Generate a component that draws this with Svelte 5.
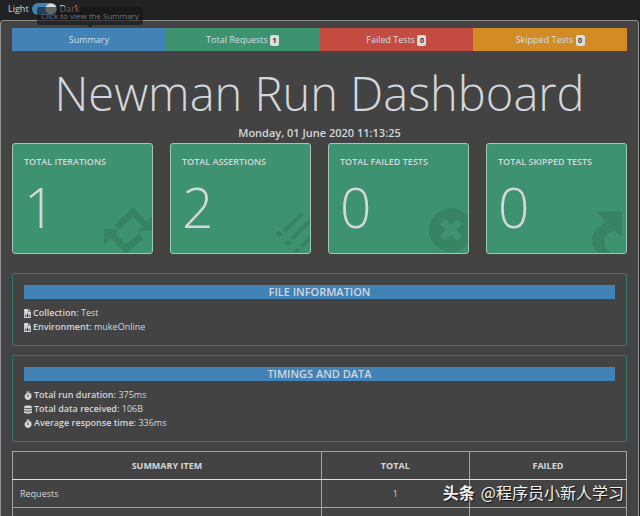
<script>
    let dark = $state(true);
    let active = $state('Summary');

    const tabs = [
        { name: 'Summary', color: 'blue' },
        { name: 'Total Requests', color: 'green', count: 1 },
        { name: 'Failed Tests', color: 'red', count: 0 },
        { name: 'Skipped Tests', color: 'orange', count: 0 }
    ];

    const cards = [
        { title: 'Total Iterations', value: 1, icon: 'retweet' },
        { title: 'Total Assertions', value: 2, icon: 'list' },
        { title: 'Total Failed Tests', value: 0, icon: 'times' },
        { title: 'Total Skipped Tests', value: 0, icon: 'share' }
    ];

    const sections = [
        {
            title: 'File Information',
            rows: [
                { icon: 'file', label: 'Collection:', value: 'Test' },
                { icon: 'file', label: 'Environment:', value: 'mukeOnline' }
            ]
        },
        {
            title: 'Timings and Data',
            rows: [
                { icon: 'clock', label: 'Total run duration:', value: '375ms' },
                { icon: 'data', label: 'Total data received:', value: '106B' },
                { icon: 'clock', label: 'Average response time:', value: '336ms' }
            ]
        }
    ];

    const summary = [
        { item: 'Requests', total: 1, failed: '' },
        { item: '', total: '', failed: '' }
    ];
</script>

<div class="page">
    <header>
        <label for="theme">Light</label>
        <input id="theme" type="checkbox" bind:checked={dark} />
        <label for="theme">Dark</label>
        <div class="tooltip" role="tooltip">Click to view the Summary</div>
    </header>

    <main>
        <nav>
            {#each tabs as tab}
                <button class={tab.color} onclick={() => (active = tab.name)}>
                    {tab.name}
                    {#if tab.count !== undefined}<span class="badge">{tab.count}</span>{/if}
                </button>
            {/each}
        </nav>

        <h1>Newman Run Dashboard</h1>
        <h2>Monday, 01 June 2020 11:13:25</h2>

        <div class="cards">
            {#each cards as card}
                <article class="card">
                    <h3>{card.title}</h3>
                    <p>{card.value}</p>
                    <svg class="card-icon" viewBox="0 0 50 50" aria-hidden="true">
                        {#if card.icon === 'retweet'}
                            <path fill="none" stroke="currentColor" stroke-width="7" d="M15 24 31 9 44 22V26M39 33 24 46 9 31V28" />
                            <path d="M35 28H51V12zM2 26H18L2 42z" />
                        {:else if card.icon === 'list'}
                            <path fill="none" stroke="currentColor" stroke-width="4" d="M24 28 42 11M32 36 55 13M41 44 60 25" />
                            <path d="M19 27l4 4-4 4-4-4zM28 36l4 4-4 4-4-4zM37 44l4 4-4 4-4-4z" />
                        {:else if card.icon === 'times'}
                            <path fill-rule="evenodd" d="M33 5a22 22 0 1 0 0 44 22 22 0 1 0 0-44zM27 16l6 6 6-6 5 5-6 6 6 6-5 5-6-6-6 6-5-5 6-6-6-6z" />
                        {:else}
                            <path d="M20 8H46V34L39 28C27 30 25 40 34 50H24C11 42 14 27 30 19z" />
                        {/if}
                    </svg>
                </article>
            {/each}
        </div>

        {#each sections as section}
            <section>
                <h4>{section.title}</h4>
                {#each section.rows as row}
                    <div class="info">
                        <svg class:narrow={row.icon === 'file'} viewBox={row.icon === 'file' ? '0 0 12 16' : '0 0 16 16'} aria-hidden="true">
                            {#if row.icon === 'file'}
                                <path fill-rule="evenodd" d="M0 0H7V5H12V16H0zM2 10V14H4V10zM5 8V14H7V8zM8 10V14H10V10zM8 0l4 4H8z" />
                            {:else if row.icon === 'clock'}
                                <path fill-rule="evenodd" d="M5 0H11V2H9V3l3 1 1-1 2 2-1 1a7 7 0 1 1-7-3V2H5zM7 6V11H9V6z" />
                            {:else}
                                <path d="M0 2C1-1 15-1 16 2V4C15 6 1 6 0 4zM0 6q8 3 16 0V9C15 11 1 11 0 9zM0 11q8 3 16 0V14C15 17 1 17 0 14z" />
                            {/if}
                        </svg>
                        <span><strong>{row.label}</strong> {row.value}</span>
                    </div>
                {/each}
            </section>
        {/each}

        <table>
            <thead>
                <tr>
                    <th class="item">Summary Item</th>
                    <th class="total">Total</th>
                    <th>Failed</th>
                </tr>
            </thead>
            <tbody>
                {#each summary as row}
                    <tr>
                        <td>{row.item}</td>
                        <td>{row.total}</td>
                        <td>{row.failed}</td>
                    </tr>
                {/each}
            </tbody>
        </table>
    </main>

    <div class="watermark"><b>头条</b><span>@程序员小新人学习</span></div>
</div>

<style>
    :global(body) {
        background: #222;
    }

    .page {
        position: relative;
        height: 100vh;
        overflow: hidden;
        color: #d3d7db;
        font-family: 'Open Sans', 'Noto Sans', sans-serif;
        font-size: 9px;
        line-height: 14px;
    }

    h1, h2, h3, h4, p {
        margin: 0;
    }

    header {
        position: relative;
        display: flex;
        align-items: center;
        gap: 3px;
        box-sizing: border-box;
        height: 20px;
        padding: 0 8px 2px;
    }

    header input {
        appearance: none;
        width: 25px;
        height: 12px;
        margin: 0;
        border-radius: 6px;
        background: radial-gradient(circle at 19px 6px, #dcdcdc 5px, transparent 6px), #4183b7;
    }

    .tooltip {
        position: absolute;
        top: 7px;
        left: 37px;
        padding: 2px 4px;
        border-radius: 2px;
        background: rgba(20, 20, 20, 0.6);
        color: #777;
        font-size: 8px;
        white-space: nowrap;
    }

    .tooltip::after {
        content: '';
        position: absolute;
        top: 100%;
        left: 50%;
        margin-left: -3px;
        border: 3px solid transparent;
        border-top-color: #282828;
    }

    main {
        margin: 0 1px 0 0;
        padding: 7px 11px 0;
        border: 1px solid #929292;
        border-radius: 3px 3px 0 0;
        background: #434343;
    }

    nav {
        display: grid;
        grid-template-columns: repeat(4, 1fr);
    }

    nav button {
        height: 23px;
        padding: 0;
        border: 0;
        color: #d3dde4;
        font: inherit;
    }

    .blue {
        background: #4183b7;
    }

    .green {
        background: #3d9370;
    }

    .red {
        background: #c44b3f;
    }

    .orange {
        background: #d38c25;
    }

    .badge {
        display: inline-block;
        width: 9px;
        border-radius: 2px;
        background: #d8dde0;
        color: #333;
        font-size: 7px;
        font-weight: 700;
        line-height: 11px;
    }

    h1 {
        padding-top: 10px;
        font-size: 47px;
        font-weight: 300;
        line-height: 64px;
        text-align: center;
        white-space: nowrap;
    }

    h2 {
        padding-top: 1px;
        font-size: 11px;
        font-weight: 600;
        text-align: center;
    }

    .cards {
        display: grid;
        grid-template-columns: repeat(4, 1fr);
        gap: 17px;
        margin: 3px 0 19px;
    }

    .card {
        position: relative;
        overflow: hidden;
        box-sizing: border-box;
        height: 111px;
        padding: 11px;
        border: 1px solid #9fc8b8;
        border-radius: 3px;
        background: #3d9370;
    }

    h3 {
        font-size: 9px;
        font-weight: 600;
        line-height: 14px;
        text-transform: uppercase;
    }

    .card p {
        padding-top: 11px;
        font-size: 55px;
        font-weight: 300;
        line-height: 54px;
    }

    .card-icon {
        position: absolute;
        right: 0;
        bottom: 0;
        width: 50px;
        height: 50px;
        fill: currentColor;
        color: #378465;
    }

    section {
        margin-bottom: 9px;
        padding: 11px;
        border: 1px solid #35786f;
        border-radius: 2px;
    }

    h4 {
        margin-bottom: 7px;
        background: #4183b7;
        font-size: 11px;
        font-weight: 600;
        text-align: center;
        text-transform: uppercase;
    }

    .info {
        display: flex;
        align-items: center;
        gap: 2px;
    }

    .info svg {
        width: 8px;
        height: 9px;
        fill: currentColor;
    }

    .info svg.narrow {
        width: 7px;
    }

    strong {
        font-weight: 600;
    }

    table {
        width: 100%;
        border-collapse: collapse;
        table-layout: fixed;
    }

    th, td {
        height: 28px;
        box-sizing: border-box;
        padding: 0 7px;
        border: 1px solid #a4a4a4;
        text-align: center;
    }

    th {
        border-bottom-color: #e0e0e0;
        font-weight: 700;
        text-transform: uppercase;
    }

    .item {
        width: 50.3%;
    }

    .total {
        width: 24.1%;
    }

    td:first-child {
        text-align: left;
    }

    .watermark {
        position: absolute;
        right: 16px;
        bottom: 12px;
        display: flex;
        gap: 6px;
        color: #f2f2f2;
        font-family: 'Noto Sans CJK SC', sans-serif;
        font-size: 16px;
        line-height: 24px;
        text-shadow: 1px 1px 1px #111;
    }
</style>
